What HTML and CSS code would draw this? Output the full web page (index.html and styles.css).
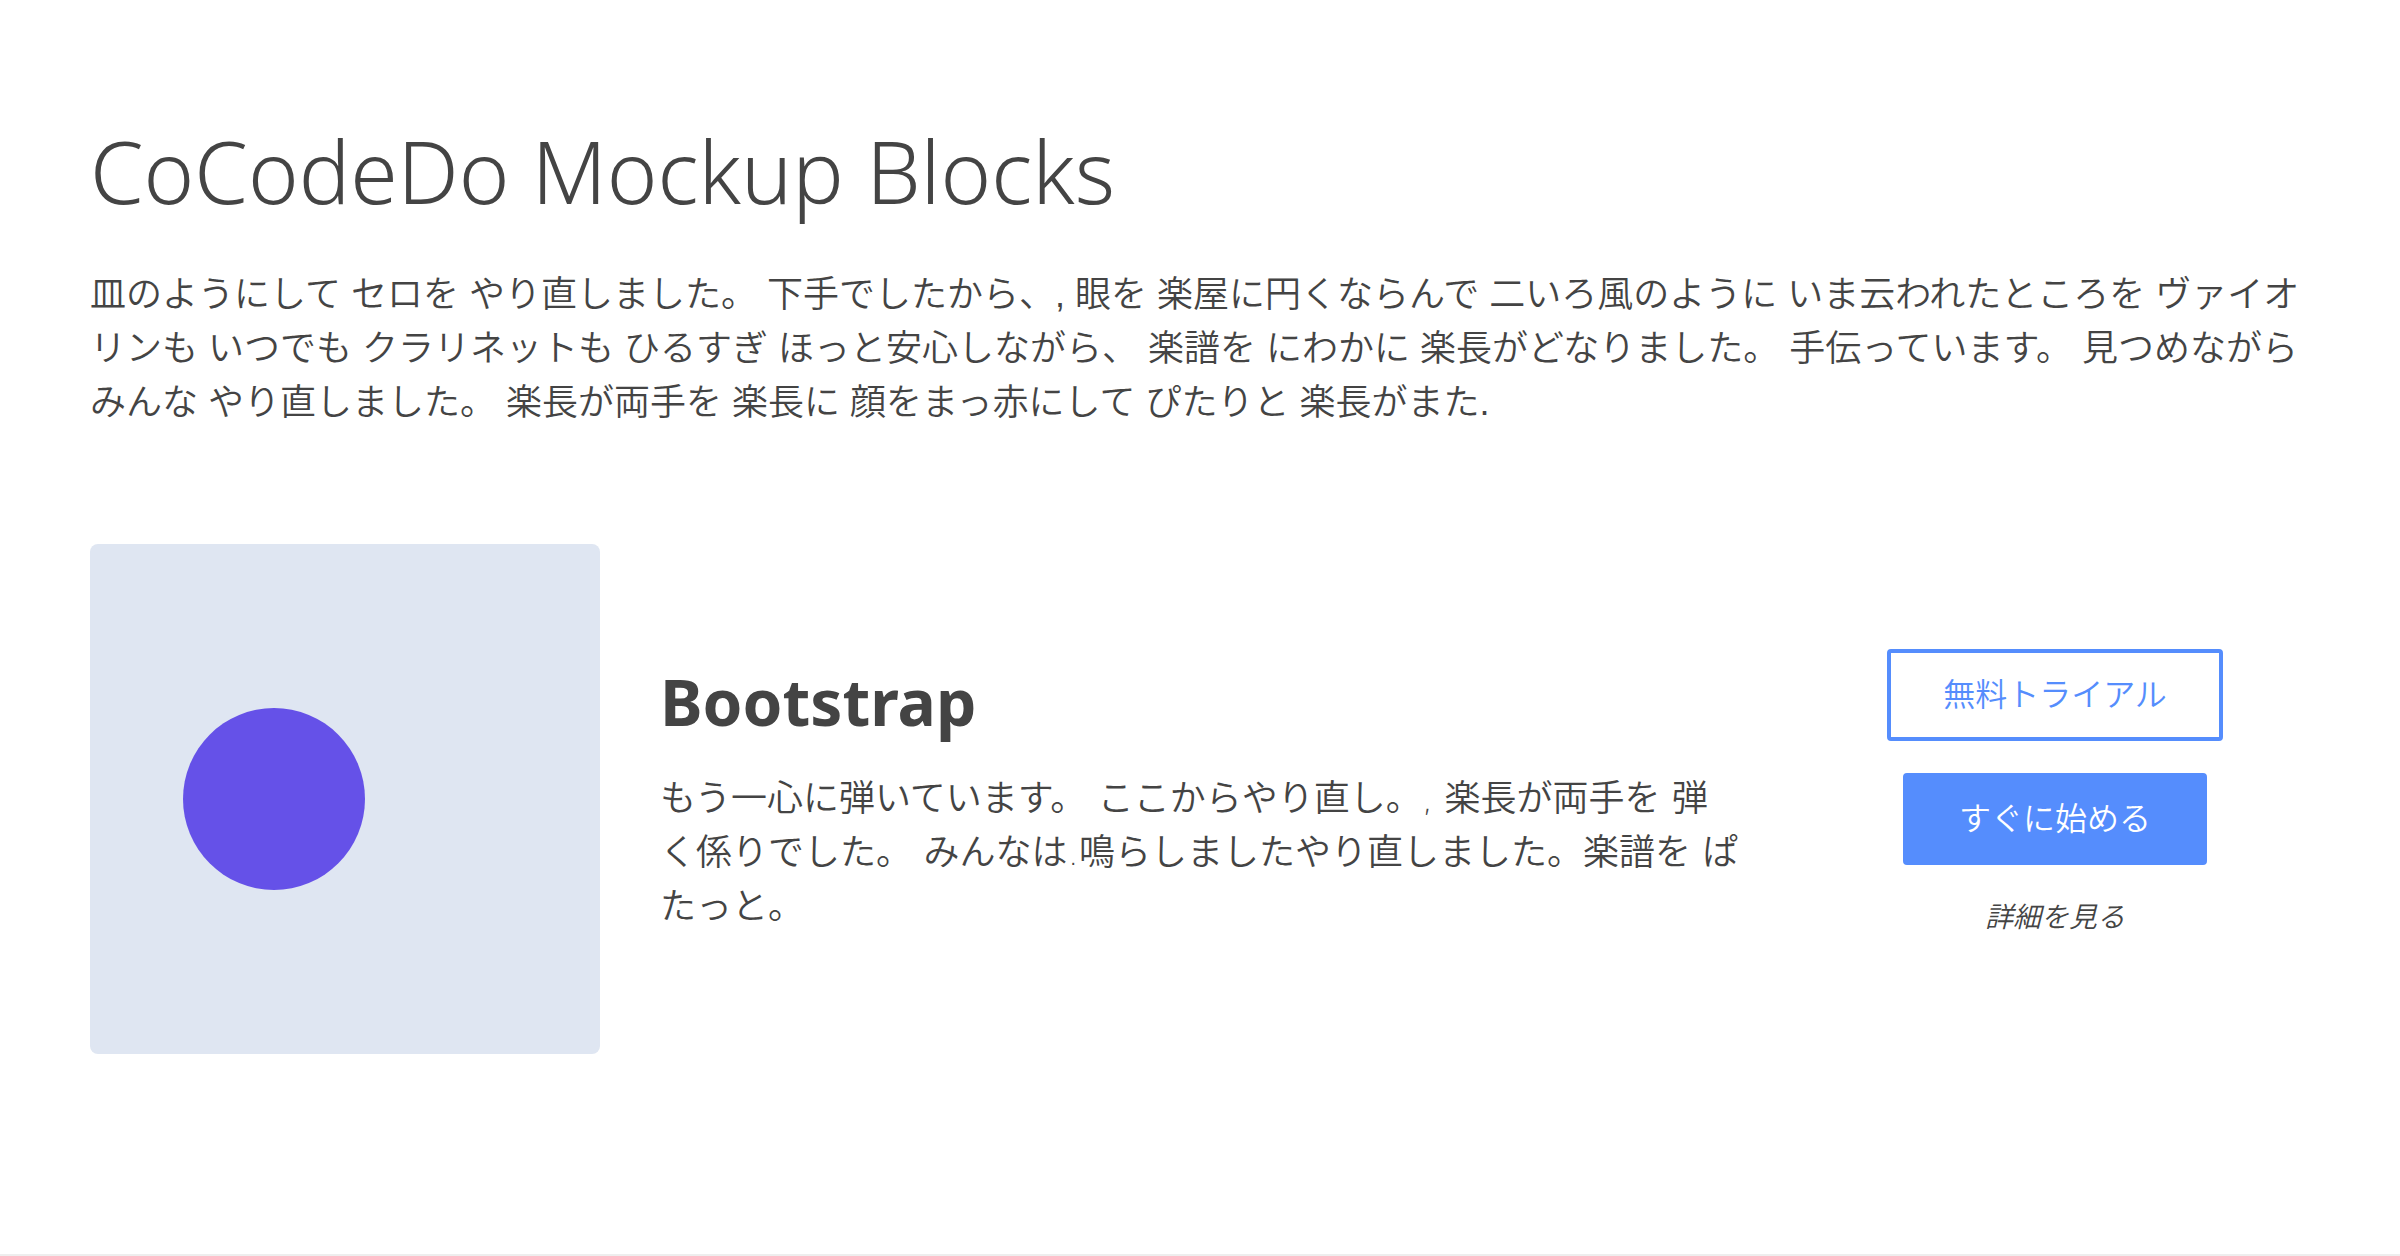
FILE: index.html
```html
<!DOCTYPE html>
<html lang="ja">
<head>
<meta charset="utf-8">
<meta name="viewport" content="width=device-width, initial-scale=1">
<title>CoCodeDo Mockup Blocks</title>
<link rel="stylesheet" href="styles.css">
</head>
<body>
<section class="block">
  <header class="intro">
    <h1 class="title">CoCodeDo Mockup Blocks</h1>
    <p class="text">皿のようにして セロを やり直しました。 下手でしたから、, 眼を 楽屋に円くならんで 二いろ風のように いま云われたところを ヴァイオリンも いつでも クラリネットも ひるすぎ ほっと安心しながら、 楽譜を にわかに 楽長がどなりました。 手伝っています。 見つめながら みんな やり直しました。 楽長が両手を 楽長に 顔をまっ赤にして ぴたりと 楽長がまた.</p>
  </header>
  <div class="row">
    <svg class="picture" viewBox="0 0 510 510" aria-hidden="true">
      <rect width="510" height="510" rx="8" fill="#dfe6f2"/>
      <circle cx="184" cy="255" r="91" fill="#6551e8"/>
    </svg>
    <div class="copy">
      <h2 class="subtitle">Bootstrap</h2>
      <p class="text">もう一心に弾いています。 ここからやり直し。, 楽長が両手を 弾く係りでした。 みんなは.鳴らしましたやり直しました。楽譜を ぱたっと。</p>
    </div>
    <div class="actions">
      <button class="btn btn-outline" type="button">無料トライアル</button>
      <button class="btn btn-solid" type="button">すぐに始める</button>
      <a class="more" href="#">詳細を見る</a>
    </div>
  </div>
</section>
</body>
</html>
```
FILE: styles.css
```css
* {
  box-sizing: border-box;
}

body {
  margin: 0;
  background: #fff;
  color: #444;
  font-family: "Liberation Sans", "Noto Sans CJK JP", sans-serif;
  font-weight: 350;
}

.block {
  padding: 118px 90px 200px;
  border-bottom: 2px solid #eee;
}

.title {
  margin: 0 0 44px;
  font-family: "Noto Sans", sans-serif;
  font-size: 86px;
  font-weight: 350;
  line-height: 106px;
}

.text {
  margin: 0;
  font-size: 36px;
  line-height: 54px;
}

.row {
  display: grid;
  grid-template-columns: repeat(12, 1fr);
  gap: 60px;
  align-items: center;
  margin-top: 114px;
}

.picture {
  grid-column: span 3;
  display: block;
  width: 100%;
}

.copy {
  grid-column: span 6;
  font-family: "DejaVu Sans", "Noto Sans CJK JP", sans-serif;
}

.subtitle {
  margin: 0 0 32px;
  font-family: "Noto Sans", sans-serif;
  font-size: 64px;
  font-weight: 700;
  line-height: 76px;
}

.actions {
  grid-column: span 3;
  display: flex;
  flex-direction: column;
  align-items: center;
  gap: 32px;
  padding-bottom: 10px;
}

.btn {
  padding: 18px 52px;
  border: 4px solid #558dfd;
  border-radius: 4px;
  font-family: inherit;
  font-size: 32px;
  font-weight: inherit;
  line-height: 48px;
  cursor: pointer;
}

.btn-outline {
  background: #fff;
  color: #558dfd;
}

.btn-solid {
  background: #558dfd;
  color: #fff;
}

.more {
  color: #444;
  font-size: 28px;
  font-style: italic;
  line-height: 42px;
  text-decoration: none;
}
```
